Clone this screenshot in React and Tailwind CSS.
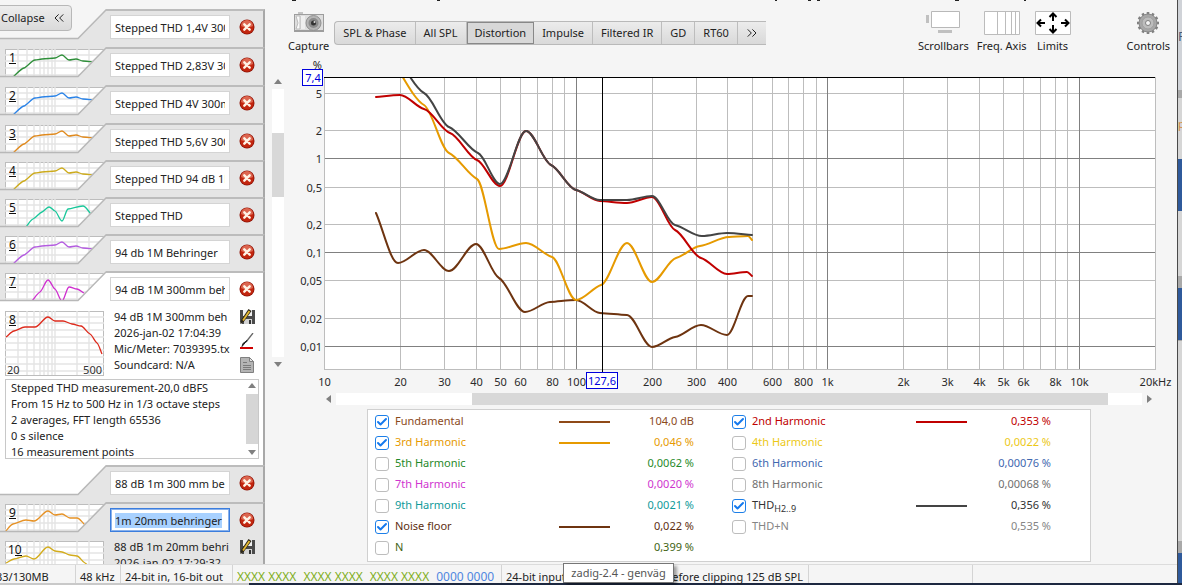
import React from 'react';
import { Check, ChevronsLeft, ChevronsRight } from 'lucide-react';

/* Colours of the measurement traces */
const RED = '#c00000';
const ORANGE = '#e69a00';
const BROWN = '#6e3410';
const DARK = '#444444';

const THD_CURVE = [[13, 30], [24, 21], [35, 13], [42, 12], [55, 11], [62, 8], [69, 13], [76, 12], [83, 14], [94, 15]];
const CURVE_5 = [[26, 30], [33, 22], [42, 15], [49, 10], [55, 14], [62, 24], [68, 12], [83, 9], [91, 17]];
const CURVE_7 = [[32, 30], [40, 21], [48, 9], [55, 18], [62, 30], [69, 16], [77, 18], [84, 22]];
const CURVE_9 = [[5, 30], [13, 22], [26, 18], [34, 19], [48, 9], [55, 13], [62, 12], [70, 16], [77, 16], [85, 23]];

const rowsBefore = [
  { title: 'Stepped THD 1,4V 300mm', tall: true },
  { no: 1, title: 'Stepped THD 2,83V 300mm', tall: true, color: '#2f8f3a', curve: THD_CURVE },
  { no: 2, title: 'Stepped THD 4V 300mm', tall: true, color: '#2a83e8', curve: THD_CURVE },
  { no: 3, title: 'Stepped THD 5,6V 300mm', color: '#e08a1e', curve: THD_CURVE },
  { no: 4, title: 'Stepped THD 94 dB 1M', color: '#cdab1c', curve: THD_CURVE },
  { no: 5, title: 'Stepped THD', color: '#19c79a', curve: CURVE_5 },
  { no: 6, title: '94 db 1M Behringer', color: '#b45ce0', curve: THD_CURVE },
  { no: 7, title: '94 dB 1M 300mm behringer', color: '#cf2fcf', curve: CURVE_7, open: true },
];

const legendLeft = [
  { label: 'Fundamental', value: '104,0 dB', text: 'text-[#8b4a1c]', line: 'bg-[#8f4a18]', on: true },
  { label: '3rd Harmonic', value: '0,046 %', text: 'text-[#e69a00]', line: 'bg-[#e69a00]', on: true },
  { label: '5th Harmonic', value: '0,0062 %', text: 'text-[#1f8a2a]' },
  { label: '7th Harmonic', value: '0,0020 %', text: 'text-[#cf35cf]' },
  { label: '9th Harmonic', value: '0,0021 %', text: 'text-[#0f9a9a]' },
  { label: 'Noise floor', value: '0,022 %', text: 'text-[#5e2f12]', line: 'bg-[#6e3410]', on: true },
  { label: 'N', value: '0,399 %', text: 'text-[#3f6414]' },
];

const legendRight = [
  { label: '2nd Harmonic', value: '0,353 %', text: 'text-[#c00000]', line: 'bg-[#c00000]', on: true },
  { label: '4th Harmonic', value: '0,0022 %', text: 'text-[#ecc818]' },
  { label: '6th Harmonic', value: '0,00076 %', text: 'text-[#3f68b0]' },
  { label: '8th Harmonic', value: '0,00068 %', text: 'text-[#707070]' },
  { label: 'THD', sub: 'H2..9', value: '0,356 %', text: 'text-[#333333]', line: 'bg-[#444444]', on: true },
  { label: 'THD+N', value: '0,535 %', text: 'text-[#858585]' },
];

const series = [
  {
    color: BROWN,
    points: [[376, 213], [398, 263], [424, 250], [449, 271], [476, 244], [499, 278], [525, 312], [550, 302], [576, 300], [600, 313], [627, 315], [652, 347], [675, 337], [701, 325], [727, 335], [748, 296], [752, 296]],
  },
  {
    color: ORANGE,
    points: [[392, 60], [424, 105], [449, 153], [477, 179], [499, 249], [526, 243], [552, 257], [576, 300], [601, 285], [627, 243], [652, 282], [676, 258], [700, 246], [729, 237], [748, 236], [752, 240]],
  },
  {
    color: RED,
    points: [[376, 97], [400, 95], [424, 109], [450, 133], [477, 160], [500, 186], [526, 131], [551, 165], [576, 190], [600, 201], [627, 203], [652, 197], [675, 230], [701, 258], [727, 274], [747, 272], [752, 276]],
  },
  {
    color: DARK,
    points: [[400, 62], [424, 93], [449, 127], [478, 153], [500, 184], [526, 131], [551, 165], [576, 190], [600, 200], [627, 200], [652, 196], [675, 225], [702, 236], [727, 233], [752, 235]],
  },
];

/* Monotone cubic path through a list of points, with flattened shoulders */
const smoothPath = (pts) => {
  const slopes = pts.slice(1).map((p, i) => (p[1] - pts[i][1]) / (p[0] - pts[i][0]));
  const tangents = pts.map((_, i) => {
    const a = slopes[i - 1];
    const b = slopes[i];
    if (a === undefined) return b;
    if (b === undefined) return a;
    return a * b <= 0 ? 0 : ((2 * a * b) / (a + b)) * 0.35;
  });
  return pts.reduce((d, p, i) => {
    if (i === 0) return `M${p[0]} ${p[1]}`;
    const q = pts[i - 1];
    const h = (p[0] - q[0]) / 3;
    return `${d}C${q[0] + h} ${q[1] + tangents[i - 1] * h} ${p[0] - h} ${p[1] - tangents[i] * h} ${p[0]} ${p[1]}`;
  }, '');
};

const ThumbGrid = ({ height }) => (
  <g stroke="#e4e4e4" strokeWidth="1.4">
    {[18, 27, 34, 40, 44, 48, 52, 55, 77, 89].map((x) => (
      <path key={x} d={`M${x} 2V${height}`} />
    ))}
    {[8, 14, 21, 28, 34, 41, 48, 55, 62].filter((y) => y < height).map((y) => (
      <path key={y} d={`M5 ${y}H104`} />
    ))}
  </g>
);

const ThumbNumber = ({ no }) => (
  <g>
    <text x={no > 9 ? 8 : 9} y="15" fontSize="12" fill="#111">{no}</text>
    <path d={no > 9 ? 'M15 16.500h7' : 'M9 16.500h7'} stroke="#111" />
  </g>
);

/* Slanted left part of a measurement tab, with the thumbnail behind it */
const TabSlope = ({ row, back }) => {
  const fill = row.open ? '#ffffff' : '#e5e5e5';
  return (
    <svg className="h-full w-[106px] shrink-0" viewBox={row.tall ? '0 0 106 38' : '0 0 106 37'} aria-hidden="true">
      <rect width="106" height="38" fill={back} />
      {row.no && (
        <g>
          <rect x="5.500" y="2.500" width="106" height="40" fill="#fff" stroke="#bdbdbd" />
          <ThumbGrid height={38} />
          <path d={smoothPath(row.curve)} fill="none" stroke={row.color} strokeWidth="1.3" />
          <ThumbNumber no={row.no} />
        </g>
      )}
      <path d="M106 0L78 29H0V38H106Z" fill={fill} />
      <path d="M107 0L78 29.500H0" fill="none" stroke="#b8b8b8" strokeWidth="1.5" />
    </svg>
  );
};

const CloseIcon = () => (
  <svg className="size-4" viewBox="0 0 16 16" aria-hidden="true">
    <circle cx="8" cy="8" r="7.500" fill="#8e1408" />
    <circle cx="8" cy="8" r="6.700" fill="#c3260f" />
    <path d="M2 7a6 6 0 0 1 12 0q-6 3-12 0z" fill="#dc6650" />
    <path d="M5.300 5.300l5.400 5.400M10.700 5.300l-5.400 5.400" stroke="#fff3e6" strokeWidth="2.400" strokeLinecap="round" />
  </svg>
);

const SaveIcon = () => (
  <svg className="h-4 w-4" viewBox="0 0 16 16" aria-hidden="true">
    <path d="M1 1h15v14H3l-2-2z" fill="#4a4a4a" />
    <path d="M4 1h9v6H4z" fill="#f0f0f0" />
    <path d="M5 10h8v5H5z" fill="#d4d4d4" />
    <path d="M10 11h2v4h-2z" fill="#333" />
    <path d="M1 15l1.500-4.500L9.500 0l3 2L5 12.500z" fill="#2c2618" />
    <path d="M3.300 11L9.700 1.500l1.500 1L4.800 12z" fill="#e5b832" />
  </svg>
);

const TraceIcon = () => (
  <svg className="h-4 w-4" viewBox="0 0 16 16" aria-hidden="true">
    <path d="M14 0L7 9" stroke="#666" strokeWidth="1.300" />
    <path d="M8 7.500L3 13.500l1-3z" fill="#222" stroke="#222" />
    <path d="M1 14h13v2H1z" fill="#d00000" />
  </svg>
);

const NotesIcon = () => (
  <svg className="h-4 w-4" viewBox="0 0 16 16" aria-hidden="true">
    <path d="M1.500.500h9l4 4v11h-13z" fill="#b4b4b4" stroke="#808080" />
    <path d="M10.500.500v4h4z" fill="#e4e4e4" stroke="#808080" />
    <path d="M4 5.500h4M4 8.500h8M4 10.500h8M4 12.500h8" stroke="#7a7a7a" />
  </svg>
);

const MeasurementTab = ({ row, back = '#e5e5e5', focused }) => (
  <div className={row.tall ? 'flex h-[38px] shrink-0' : 'flex h-[37px] shrink-0'}>
    <TabSlope row={row} back={back} />
    <div
      className={
        'flex min-w-0 flex-1 items-start gap-[9px] border-t-2 border-r-2 border-t-[#bcbcbc] border-r-[#a8a8a8] pt-1 pl-1 ' +
        (row.open ? 'bg-white' : 'bg-[#e5e5e5]')
      }
    >
      <input
        type="text"
        aria-label={`Measurement title ${row.title}`}
        defaultValue={row.title}
        autoFocus={focused}
        onFocus={(e) => focused && e.target.select()}
        className={
          'h-6 w-[120px] border bg-white px-1 text-[11px] outline-none selection:bg-[#a8d1ff] selection:text-[#222] ' +
          (focused ? 'border-[#3b7ddd] ring-1 ring-[#3b7ddd]/60 ring-inset' : 'border-[#d4d4d4]')
        }
      />
      <button type="button" aria-label="Remove measurement" className="mt-1">
        <CloseIcon />
      </button>
    </div>
  </div>
);

const Arrow = ({ d }) => (
  <svg className="size-2" viewBox="0 0 8 8" aria-hidden="true">
    <path d={d} fill="#808080" />
  </svg>
);

const UP = 'M0 6L4 1L8 6Z';
const DOWN = 'M0 2L4 7L8 2Z';

const Thumbnail = ({ no, color, curve, limits }) => (
  <svg className="h-[70px] w-[106px] shrink-0" viewBox="0 0 106 70" aria-hidden="true">
    <rect x="5.500" y="2.500" width="98" height="64" fill="#fff" stroke="#bdbdbd" />
    <ThumbGrid height={66} />
    <path d={smoothPath(curve)} fill="none" stroke={color} strokeWidth="1.300" />
    <ThumbNumber no={no} />
    {limits && (
      <g fontSize="11" fill="#333">
        <text x="7" y="65">20</text>
        <text x="102" y="65" textAnchor="end">500</text>
      </g>
    )}
  </svg>
);

const Sidebar = () => (
  <aside className="relative flex w-[265px] shrink-0 flex-col overflow-hidden pt-[9px]">
    <button
      type="button"
      className="absolute top-[5px] -left-1 z-10 flex h-[26px] w-[76px] items-center justify-between rounded border border-[#b8b8b8] bg-gradient-to-b from-[#ededed] to-[#dadada] pr-1 pl-1 text-[11px]"
    >
      Collapse
      <ChevronsLeft className="size-4" strokeWidth={1.5} />
    </button>

    {rowsBefore.map((row, i) => (
      <MeasurementTab key={row.title} row={row} back={i === 0 ? '#f5f5f5' : '#e5e5e5'} />
    ))}

    {/* Expanded measurement */}
    <div className="flex h-[157px] shrink-0 flex-col border-r-2 border-[#a8a8a8] bg-white pt-px">
      <div className="flex">
        <Thumbnail
          no={8}
          color="#dd2a1c"
          limits
          curve={[[6, 28], [14, 22], [25, 18], [35, 18], [48, 8], [55, 12], [63, 12], [72, 15], [81, 17], [90, 25], [97, 34], [102, 45]]}
        />
        <div className="w-[124px] overflow-hidden pl-2 text-[11px] leading-4 whitespace-nowrap">
          <p>94 dB 1M 300mm beh</p>
          <p>2026-jan-02 17:04:39</p>
          <p>Mic/Meter: 7039395.tx</p>
          <p>Soundcard: N/A</p>
        </div>
        <div className="flex flex-col items-center gap-2 pl-[9px]">
          <button type="button" aria-label="Save measurement"><SaveIcon /></button>
          <button type="button" aria-label="Trace options"><TraceIcon /></button>
          <button type="button" aria-label="Notes"><NotesIcon /></button>
        </div>
      </div>
      <div className="mr-1 ml-[5px] flex h-[80px] border border-[#c8c8c8]">
        <div className="min-w-0 flex-1 pl-[5px] text-[11px] leading-4 whitespace-nowrap">
          <p>Stepped THD measurement-20,0 dBFS</p>
          <p>From 15 Hz to 500 Hz in 1/3 octave steps</p>
          <p>2 averages, FFT length 65536</p>
          <p>0 s silence</p>
          <p>16 measurement points</p>
        </div>
        <div className="flex w-3 flex-col items-center justify-between py-[2px]">
          <Arrow d={UP} />
          <div className="my-1 w-full flex-1 bg-[#d6d6d6]" />
          <Arrow d={DOWN} />
        </div>
      </div>
    </div>

    <MeasurementTab row={{ title: '88 dB 1m 300 mm behringer' }} back="#ffffff" />
    <MeasurementTab row={{ no: 9, title: '1m 20mm behringer', color: '#e69226', curve: CURVE_9 }} focused />
    <div className="flex shrink-0 border-r-2 border-[#a8a8a8] bg-[#e5e5e5]">
      <Thumbnail
        no={10}
        color="#d3ac1c"
        curve={[[6, 24], [14, 20], [26, 17], [34, 20], [48, 8], [55, 12], [62, 13], [70, 16], [77, 17], [85, 24], [95, 38]]}
      />
      <div className="w-[126px] overflow-hidden pl-2 text-[11px] leading-4 whitespace-nowrap">
        <p>88 dB 1m 20mm behri</p>
        <p>2026-jan-02 17:29:32</p>
      </div>
      <div className="pl-[7px]">
        <SaveIcon />
      </div>
    </div>
  </aside>
);

const ToolButton = ({ label, children }) => (
  <button type="button" className="flex flex-col items-center gap-0.5 text-[11px] leading-4">
    <span className="flex h-[26px] items-center">{children}</span>
    {label}
  </button>
);

const CameraIcon = () => (
  <svg className="h-6 w-8" viewBox="0 0 32 24" aria-hidden="true">
    <path d="M5 1h5v3H5z" fill="#c4c4c4" />
    <path d="M1 3h30v18H1z" fill="#9d9d9d" />
    <path d="M2 4h28v15H2z" fill="#dedede" />
    <path d="M3 5h4v13H3l2-6z" fill="#fafafa" stroke="#bbb" />
    <path d="M8 5h4v13H8z" fill="#efefef" />
    <circle cx="20.500" cy="12" r="7.500" fill="#b4b4b4" stroke="#909090" />
    <circle cx="20.500" cy="12" r="5" fill="#8a8a8a" />
    <circle cx="20.500" cy="12" r="2.500" fill="#333" />
    <circle cx="21.500" cy="11" r="1" fill="#ddd" />
  </svg>
);

const GearIcon = () => (
  <svg className="size-6" viewBox="0 0 24 24" aria-hidden="true">
    <g stroke="#808080" strokeWidth="2.600">
      {[0, 30, 60, 90, 120, 150].map((deg) => (
        <path key={deg} d="M12 1V23" transform={`rotate(${deg} 12 12)`} />
      ))}
    </g>
    <circle cx="12" cy="12" r="9" fill="#a8a8a8" stroke="#888" />
    <circle cx="12" cy="12" r="6" fill="#bdbdbd" stroke="#a0a0a0" />
    <circle cx="12" cy="12" r="2.500" fill="#f5f5f5" stroke="#808080" />
  </svg>
);

const graphTabs = ['SPL & Phase', 'All SPL', 'Distortion', 'Impulse', 'Filtered IR', 'GD', 'RT60'];

const Toolbar = () => (
  <div className="flex h-12 items-start justify-between pr-[7px] pl-[3px]">
    <div className="flex items-start gap-[5px]">
      <ToolButton label="Capture"><CameraIcon /></ToolButton>
      <div className="mt-[11px] flex h-6 rounded-l border border-r-0 border-[#b9b9b9] bg-gradient-to-b from-[#ececec] to-[#d9d9d9] text-[11px]">
        {graphTabs.map((tab) => (
          <button
            key={tab}
            type="button"
            className={
              tab === 'Distortion'
                ? 'border border-[#888888] bg-[#d8d8d8] px-[7px]'
                : 'border-r border-[#bdbdbd] px-2'
            }
          >
            {tab}
          </button>
        ))}
        <button type="button" aria-label="More graphs" className="px-1.5">
          <ChevronsRight className="size-4" strokeWidth={1.5} />
        </button>
      </div>
    </div>
    <div className="flex items-start gap-2">
      <ToolButton label="Scrollbars">
        <svg className="h-6 w-9" viewBox="0 0 36 24" aria-hidden="true">
          <path d="M1 4h3v8H1zM13 19h14v3H13z" fill="#c0c0c0" />
          <path d="M6.500.500h28v16h-28z" fill="#fff" stroke="#b8b8b8" />
        </svg>
      </ToolButton>
      <ToolButton label="Freq. Axis">
        <svg className="h-6 w-9" viewBox="0 0 36 24" aria-hidden="true">
          <path d="M.500.500h35v23H.500z" fill="#fff" stroke="#bcbcbc" />
          <path d="M13.500 0v24M21.500 0v24M27.500 0v24M31.500 0v24" stroke="#bcbcbc" />
        </svg>
      </ToolButton>
      <ToolButton label="Limits">
        <svg className="h-6 w-9" viewBox="0 0 36 24" aria-hidden="true">
          <path d="M.500.500h35v23H.500z" fill="#fff" stroke="#bcbcbc" />
          <path
            d="M14.500 6L18 2.500 21.500 6M18 3v7M14.500 18l3.500 3.500 3.500-3.500M18 21v-7M6 8.500L2.500 12 6 15.500M3 12h7M30 8.500l3.500 3.500-3.500 3.500M33 12h-7"
            fill="none"
            stroke="#000"
            strokeWidth="2"
          />
        </svg>
      </ToolButton>
      <div className="ml-12">
        <ToolButton label="Controls"><GearIcon /></ToolButton>
      </div>
    </div>
  </div>
);

const freqX = (hz) => Math.floor(324.9 + 251.5 * Math.log10(hz / 10)) + 0.5;

const minorFreqs = [20, 30, 40, 50, 60, 70, 80, 90, 200, 300, 400, 500, 600, 700, 800, 900, 2000, 3000, 4000, 5000, 6000, 7000, 8000, 9000];
const majorFreqs = [100, 1000, 10000];
const freqLabels = [
  [10, '10'], [20, '20'], [30, '30'], [40, '40'], [50, '50'], [60, '60'], [80, '80'], [100, '100'],
  [200, '200'], [300, '300'], [400, '400'], [600, '600'], [800, '800'], [1000, '1k'],
  [2000, '2k'], [3000, '3k'], [4000, '4k'], [5000, '5k'], [6000, '6k'], [8000, '8k'], [10000, '10k'], [20000, '20kHz'],
];
const levels = [
  ['5', 93.5], ['2', 130.5], ['1', 158.5, true], ['0,5', 187.5], ['0,2', 224.5],
  ['0,1', 252.5, true], ['0,05', 280.5], ['0,02', 318.5], ['0,01', 346.5, true],
];

const DistortionChart = () => (
  <svg className="w-full" viewBox="285 58 892 332" role="img" aria-label="Distortion against frequency">
    <defs>
      <clipPath id="plot"><rect x="325" y="77" width="830" height="292" /></clipPath>
    </defs>
    <rect x="324.500" y="77.500" width="831" height="292" fill="#fff" stroke="#bdbdbd" />
    <g stroke="#bdbdbd">
      {minorFreqs.map((hz) => <path key={hz} d={`M${freqX(hz)} 78V369`} />)}
      {levels.filter((l) => !l[2]).map(([text, y]) => <path key={text} d={`M325 ${y}H1155`} />)}
    </g>
    <g stroke="#808080">
      {majorFreqs.map((hz) => <path key={hz} d={`M${freqX(hz)} 78V369`} />)}
      {levels.filter((l) => l[2]).map(([text, y]) => <path key={text} d={`M325 ${y}H1155`} />)}
    </g>
    <g clipPath="url(#plot)" fill="none" strokeWidth="2" strokeLinecap="round">
      {series.map((s) => <path key={s.color} d={smoothPath(s.points)} stroke={s.color} />)}
    </g>
    <path d="M324 77.500H1155M602.500 77V372" stroke="#000" />

    <g fontSize="11" fill="#2a2a2a">
      <text x="322" y="69" textAnchor="end">%</text>
      {levels.map(([text, y]) => <text key={text} x="322" y={y + 4} textAnchor="end">{text}</text>)}
      {freqLabels.map(([hz, text]) => <text key={text} x={freqX(hz)} y="386" textAnchor="middle">{text}</text>)}
    </g>

    {/* Cursor read-outs */}
    <g fill="#fff" stroke="#0000dd">
      <rect x="302.500" y="69.500" width="20" height="16" />
      <rect x="586.500" y="372.500" width="31" height="16" />
    </g>
    <g fontSize="11" fill="#0000dd" textAnchor="middle">
      <text x="313" y="82">7,4</text>
      <text x="602" y="385">127,6</text>
    </g>
  </svg>
);

const LegendItem = ({ item }) => (
  <label className={`flex h-[21px] items-center pr-[31px] pl-[7px] ${item.text}`}>
    <span className="mr-1.5 grid size-3.5 shrink-0">
      <input
        type="checkbox"
        defaultChecked={item.on}
        className="peer col-start-1 row-start-1 size-3.5 appearance-none rounded-[3px] border border-[#bdbdbd] bg-white checked:border-[#1d7fe8]"
      />
      <Check className="pointer-events-none invisible col-start-1 row-start-1 size-3.5 p-px text-[#1479ee] peer-checked:visible" strokeWidth={4} />
    </span>
    <span className="w-[164px]">
      {item.label}
      {item.sub && <sub className="text-[9px]">{item.sub}</sub>}
    </span>
    <span className={`h-[2px] w-[51px] ${item.line || ''}`} />
    <span className="ml-auto">{item.value}</span>
  </label>
);

const Legend = () => (
  <div className="mt-1 mr-[86px] ml-[82px] grid h-[153px] grid-cols-[357px_357px] border border-[#d0d0d0] bg-white pt-px text-[11px]">
    <div>{legendLeft.map((item) => <LegendItem key={item.label} item={item} />)}</div>
    <div>{legendRight.map((item) => <LegendItem key={item.label} item={item} />)}</div>
  </div>
);

const StatusBar = () => (
  <footer className="relative flex h-[19px] shrink-0 items-stretch overflow-visible border-t border-[#dcdcdc] text-[11px] leading-[23px] whitespace-nowrap">
    <span className="-ml-1 w-[80px] border-r border-[#d4d4d4]">33/130MB</span>
    <span className="w-[45px] border-r border-[#d4d4d4] pl-1">48 kHz</span>
    <span className="w-[112px] border-r border-[#d4d4d4] pl-1">24-bit in, 16-bit out</span>
    <span className="flex w-[269px] gap-[7px] border-r border-[#d4d4d4] pl-1 text-[12px] text-[#7fae1c]">
      <span>XXXX XXXX</span>
      <span>XXXX XXXX</span>
      <span>XXXX XXXX</span>
      <span className="text-[#4f86e0]">0000 0000</span>
    </span>
    <span className="flex w-[307px] justify-between border-r border-[#d4d4d4] pr-[5px] pl-1">
      <span>24-bit input</span>
      <span>before clipping 125 dB SPL</span>
    </span>
    <span className="w-[164px] border-r border-[#d4d4d4]" />
    <span role="tooltip" className="absolute -top-0.5 left-[563px] z-10 h-5 w-[111px] border border-[#767676] bg-white text-center leading-[18px] text-[#555] shadow-[3px_3px_3px_rgba(0,0,0,0.35)]">
      zadig-2.4 - genväg
    </span>
  </footer>
);

export default function App() {
  return (
    <div className="flex h-screen flex-col overflow-hidden bg-[#f5f5f5] font-['Noto_Sans',sans-serif] text-[#222222]">
      <div className="flex min-h-0 flex-1">
        <div className="flex min-w-0 flex-1 flex-col">
          <div className="flex min-h-0 flex-1 overflow-hidden">
            <Sidebar />
            <div className="flex w-5 shrink-0 flex-col items-center pt-[78px] pl-[6px]">
              <Arrow d={UP} />
              <div className="my-[3px] h-[268px] w-3 bg-white pt-[44px]">
                <div className="h-16 bg-[#d8d8d8]" />
              </div>
              <Arrow d={DOWN} />
            </div>

            <main className="min-w-0 flex-1">
              {/* Lower edge of the window's title line */}
              <svg className="h-2.5 w-full" viewBox="285 0 892 10" aria-hidden="true">
                <path d="M292 .500h4M437 .500h3M775 .500h2M808 .500h3M817 .500h3M955 .500h4M1024 .500h2" stroke="#222" />
              </svg>
              <Toolbar />
              <DistortionChart />
              <div className="mt-[3px] flex h-3 items-center gap-[3px] pr-6 pl-10">
                <Arrow d="M6 0L1 4L6 8Z" />
                <div className="h-3 flex-1 bg-white pr-[34px] pl-[136px]">
                  <div className="h-3 bg-[#d8d8d8]" />
                </div>
                <Arrow d="M2 0L7 4L2 8Z" />
              </div>
              <Legend />
            </main>
          </div>
          <StatusBar />
        </div>

        {/* Sliver of the window behind */}
        <div className="flex w-[5px] shrink-0 flex-col overflow-hidden border-l border-[#4a4a4a] bg-[#d6d6d6]">
          <div className="h-[90px] overflow-hidden bg-[#d0d3d8] pt-[26px] text-[13px] leading-5 text-[#4a5a78]">R</div>
          <div className="h-2 bg-[#a9a9a9]" />
          <div className="h-[61px] overflow-hidden pt-[18px] text-[11px] leading-4 text-[#d08a3a]">p</div>
          <div className="h-[52px] bg-[#2f5a9b]" />
          <div className="h-[77px] border-b-[12px] border-[#a9a9a9]" />
          <div className="h-[52px] bg-[#2f5a9b]" />
          <div className="h-[213px] border-y border-b-[12px] border-[#a9a9a9]" />
          <div className="flex-1 bg-[#2f5a9b]" />
        </div>
      </div>
      <div className="h-[2px] shrink-0 border-l-[249px] border-[#c9c9c9] bg-[#1d2840]" />
    </div>
  );
}
